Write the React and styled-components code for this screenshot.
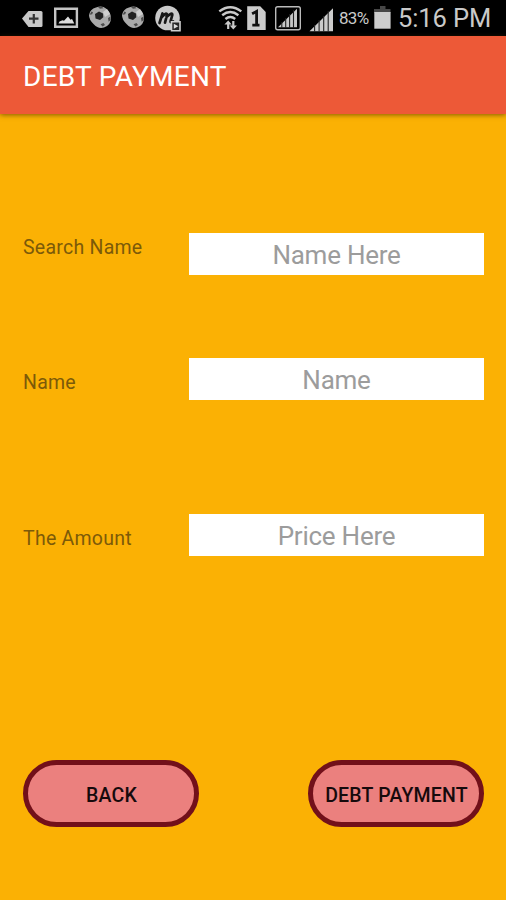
import React from "react";
import styled, { createGlobalStyle } from "styled-components";

const Global = createGlobalStyle`
  *, *::before, *::after { box-sizing: border-box; }
  body { margin: 0; background: #fbb104; font-family: Roboto, "Liberation Sans", sans-serif; }
`;

const Screen = styled.div`
  display: flex;
  flex-direction: column;
  height: 900px;
  width: 506px;
  overflow: hidden;
  background: #fbb104;
`;

const StatusBar = styled.div`
  display: flex;
  align-items: flex-start;
  justify-content: space-between;
  height: 36px;
  padding: 0 14px 0 20px;
  background: #000;
  color: #c9c9c9;
`;

const IconGroup = styled.div`
  display: flex;
  flex: none;
  height: 36px;
`;

const StatusIcon = styled.svg`
  display: block;
  flex: none;
  width: ${(p) => p.$w}px;
  height: 36px;
`;

const Battery = styled.span`
  width: 34px;
  padding-left: 1px;
  font-size: 17px;
  line-height: 37px;
  letter-spacing: -0.7px;
`;

const Clock = styled.span`
  width: 94px;
  font-size: 25.5px;
  line-height: 37px;
  letter-spacing: -0.1px;
  white-space: nowrap;
`;

const AppBar = styled.header`
  display: flex;
  align-items: center;
  flex: none;
  height: 78px;
  padding: 4px 23px 0;
  background: #ed5937;
  box-shadow: 0 1px 5px rgba(70, 45, 0, 0.65);
`;

const Title = styled.h1`
  margin: 0;
  color: #fff;
  font-size: 28px;
  font-weight: 400;
  letter-spacing: 0.25px;
  line-height: 34px;
  white-space: nowrap;
`;

const Form = styled.form`
  display: flex;
  flex-direction: column;
  padding: 119px 22px 0 23px;
`;

const Field = styled.label`
  display: grid;
  grid-template-columns: 166px 1fr;
  height: 42px;
  margin-bottom: ${(p) => p.$gap || 0}px;
`;

const FieldName = styled.span`
  padding-top: ${(p) => p.$top}px;
  color: #7c5a09;
  font-size: 19.5px;
  line-height: 24px;
  letter-spacing: 0.25px;
`;

const Input = styled.input`
  width: 100%;
  height: 42px;
  padding: 2px 0 0;
  border: 0;
  border-radius: 0;
  outline: 0;
  background: #fff;
  font-family: inherit;
  font-size: 26px;
  font-weight: 400;
  letter-spacing: -0.25px;
  text-align: center;
  &::placeholder { color: #9c9c9c; opacity: 1; }
`;

const Actions = styled.div`
  display: flex;
  justify-content: space-between;
  padding-top: 204px;
`;

const PillButton = styled.button`
  width: 176px;
  height: 67px;
  padding: 3px 0 0 1px;
  border: 5px solid #72101a;
  border-radius: 34px;
  background: #eb807e;
  color: #160a0c;
  font-family: inherit;
  font-size: 19.5px;
  font-weight: 500;
  letter-spacing: 0.2px;
  white-space: nowrap;
`;

function TagIcon() {
  return (
    <StatusIcon $w={33} viewBox="0 0 33 36">
      <path d="M2 18.5 8.5 11H21q1.5 0 1.5 1.5v13q0 1.5-1.5 1.5H8.5Z" fill="#c8c8c8" />
      <path d="M13.8 14v9.4M9 18.7h9.5" stroke="#333" strokeWidth="2.2" />
    </StatusIcon>
  );
}

function PictureIcon() {
  return (
    <StatusIcon $w={35} viewBox="53 0 35 36">
      <path d="M55.2 8.7h21.7v18.1H55.2Z" fill="none" stroke="#c4c4c4" strokeWidth="2.4" />
      <path d="m58.5 23.5 1-2 3-1.3 1.5.5 4-4.2 2.5 3.3 1.5-.8 2.3 4.5Z" fill="#ddd" />
    </StatusIcon>
  );
}

function BallIcon({ w }) {
  return (
    <StatusIcon $w={w} viewBox={`0 0 ${w} 36`}>
      <path d="M1 15Q2 9 8 7.5q6-2.4 10 1 5 4 5 9.5 0 7-7 9.5-6 1.5-10-3Q1 20 1 15Z" fill="#aaa" />
      <path d="m7 14 4-2.5 4 2 .3 3.7-3.3 2.8-4.5-1.5Z" fill="#222" />
      <path d="m1.6 14.8 1.8-3.3 1.6.8-.8 2ZM10 7.3l4-.6 1.5 1.5-3.5.6ZM20 18l2.5-1.5.1 3.5-2 1.7ZM12.5 24.2l3-1.2 1.5 2-2.5 1.5Z" fill="#4c4c4c" />
      <path d="m15 12 4-3 3 5-5 3Z" fill="#cfcfcf" />
    </StatusIcon>
  );
}

function MessengerIcon() {
  return (
    <StatusIcon $w={29} viewBox="154 0 29 36">
      <circle cx="167.5" cy="18" r="12.3" fill="#c9c9c9" />
      <path d="m159.5 23 3-9.5M161.8 17q5-5.5 5.2-2L165 22.7M166.5 17q6-5.5 5.8-2l-1.7 6.2q-.4 2 2.5.3" fill="none" stroke="#171717" strokeWidth="2.7" strokeLinecap="round" strokeLinejoin="round" />
      <path d="M171.5 21.7h8.5v9h-8.5Z" fill="#262626" stroke="#d0d0d0" strokeWidth="1.6" />
      <path d="m173.8 23.7 4.5 2.5-4.5 2.6Z" fill="#ddd" />
    </StatusIcon>
  );
}

function WifiIcon() {
  return (
    <StatusIcon $w={28} viewBox="218 0 28 36">
      <path d="M219.3 11.4q11-8.4 22 0M222.2 15.3q8.1-6.4 16.2 0M225.4 19q4.9-4 9.8 0" fill="none" stroke="#c9c9c9" strokeWidth="2.4" />
      <path d="M228.2 29v-7M233.3 21v7" stroke="#c9c9c9" strokeWidth="2.2" />
      <path d="m224.4 24.5 3.8-4 3.5 4ZM229.7 25.5h7.2l-3.6 4Z" fill="#c9c9c9" />
    </StatusIcon>
  );
}

function SimIcon() {
  return (
    <StatusIcon $w={28} viewBox="246 0 28 36">
      <path d="M247.2 6.3h13l5.5 5.6v18h-18.5Z" fill="#cbcbcb" />
      <path d="m252.1 13.8 4.5-2.4v14.3M252.3 25.1h7.2" fill="none" stroke="#111" strokeWidth="2.8" />
    </StatusIcon>
  );
}

function BoxedSignalIcon() {
  return (
    <StatusIcon $w={34} viewBox="274 0 34 36">
      <rect x="275.7" y="6.7" width="24.6" height="23" rx="2" fill="none" stroke="#bbb" strokeWidth="1.4" />
      <path d="m278 27.3 19-18.5v18.5Z" fill="#c7c7c7" />
      <path d="M281.8 22v6M285.7 18v10M289.6 14v14M293.5 10v18" stroke="#202020" strokeWidth="1.1" />
    </StatusIcon>
  );
}

function SignalIcon() {
  return (
    <StatusIcon $w={30} viewBox="308 0 30 36">
      <path d="m309.5 31.3 23.5-23v23Z" fill="#ccc" />
      <path d="M314.6 25v6.5M319.1 20v11.5M323.7 16v15.5M328.2 11v20.5" stroke="#242424" strokeWidth="1.1" />
    </StatusIcon>
  );
}

function BatteryIcon() {
  return (
    <StatusIcon $w={26} viewBox="372 0 26 36">
      <path d="M380 6h5.5v3h5v4H374V9h6Z" fill="#474747" />
      <path d="M374.3 12h16.3v16.7h-16.3Z" fill="#cdcdcd" />
    </StatusIcon>
  );
}

export default function App() {
  return (
    <>
      <Global />
      <Screen>
        <StatusBar>
          <IconGroup>
            <TagIcon />
            <PictureIcon />
            <BallIcon w={33} />
            <BallIcon w={33} />
            <MessengerIcon />
          </IconGroup>
          <IconGroup>
            <WifiIcon />
            <SimIcon />
            <BoxedSignalIcon />
            <SignalIcon />
            <Battery>83%</Battery>
            <BatteryIcon />
            <Clock>5:16 PM</Clock>
          </IconGroup>
        </StatusBar>
        <AppBar>
          <Title>DEBT PAYMENT</Title>
        </AppBar>
        <Form>
          <Field $gap={83}>
            <FieldName $top={3}>Search Name</FieldName>
            <Input placeholder="Name Here" />
          </Field>
          <Field $gap={114}>
            <FieldName $top={13}>Name</FieldName>
            <Input placeholder="Name" />
          </Field>
          <Field>
            <FieldName $top={13}>The Amount</FieldName>
            <Input placeholder="Price Here" />
          </Field>
          <Actions>
            <PillButton type="button">BACK</PillButton>
            <PillButton type="button">DEBT PAYMENT</PillButton>
          </Actions>
        </Form>
      </Screen>
    </>
  );
}
